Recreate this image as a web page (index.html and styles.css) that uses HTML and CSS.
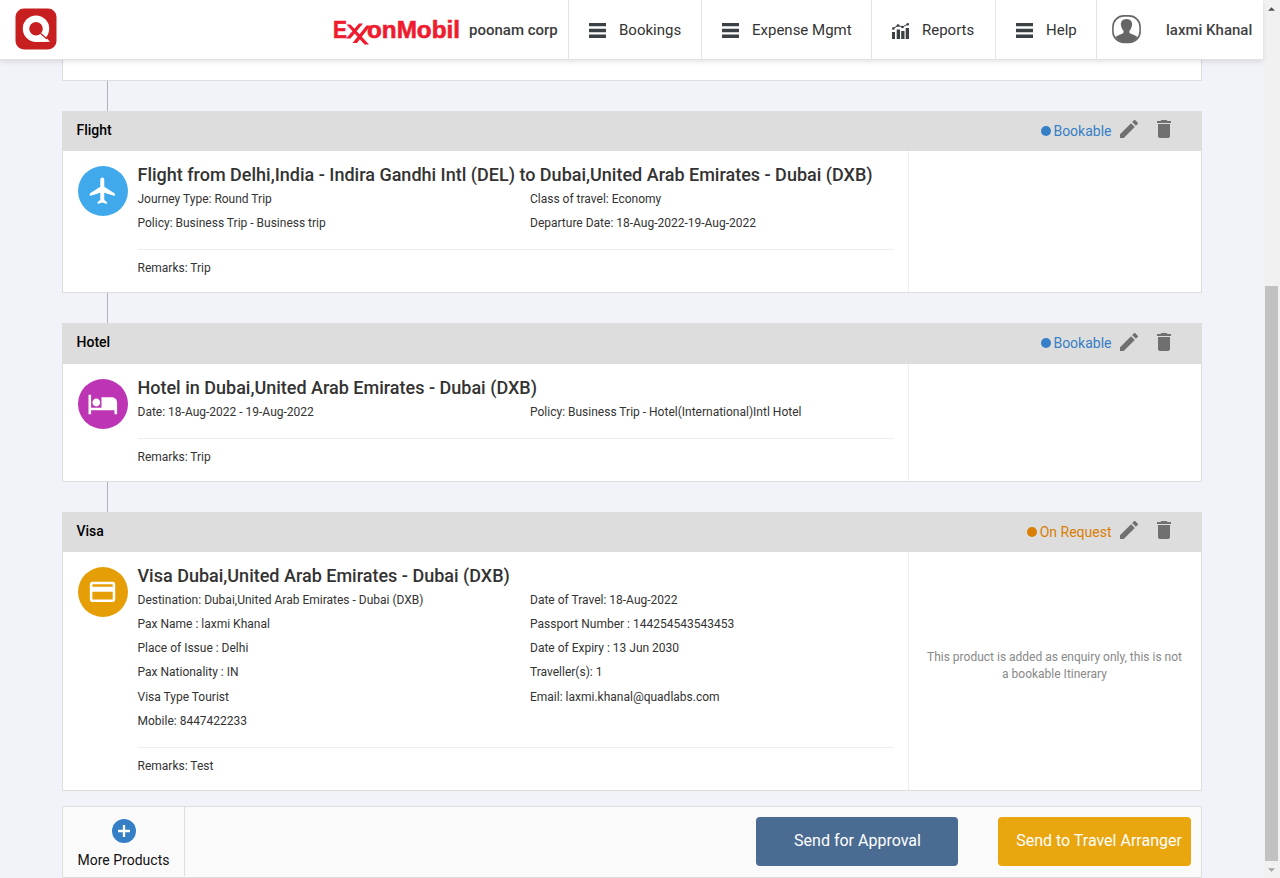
FILE: index.html
```html
<!DOCTYPE html>
<html lang="en">
<head>
<meta charset="utf-8">
<title>Trip request</title>
<link rel="stylesheet" href="styles.css">
</head>
<body>
<svg class="defs" aria-hidden="true">
  <symbol id="pencil" viewBox="0 0 24 24"><path d="M3 17.25V21h3.75L17.81 9.94l-3.75-3.75L3 17.25zM20.71 7.04a1 1 0 0 0 0-1.41l-2.34-2.34a1 1 0 0 0-1.41 0l-1.83 1.83 3.75 3.75 1.83-1.83z"/></symbol>
  <symbol id="trash" viewBox="0 0 24 24"><path d="M6 19c0 1.1.9 2 2 2h8c1.100 0 2-.9 2-2V7H6v12zM19 4h-3.500l-1-1h-5l-1 1H5v2h14V4z"/></symbol>
  <symbol id="bars" viewBox="0 0 17 15"><path d="M0 0h17v3.300H0zM0 5.700h17v3.500H0zM0 11.500h17v3.500H0z"/></symbol>
</svg>
<div class="page">
  <div class="main">
    <header class="topbar">
      <svg class="logo" viewBox="0 0 42 42"><rect x=".5" y=".5" width="41" height="41" rx="8.500" fill="#c71e20"/><circle cx="21" cy="20.700" r="10" fill="none" stroke="#fff" stroke-width="6.400"/><path d="M27 25L35 33.800Q28 34 20 33.800Z" fill="#fff"/><path d="M25.500 25.200L32 31" stroke="#c71e20" stroke-width="1.200"/></svg>
      <div class="corp">
        <svg class="exxon" viewBox="0 0 128 28"><g fill="#ee1c2e" stroke="#ee1c2e" stroke-width=".6" font-family="Liberation Sans, sans-serif" font-weight="700"><text x="0" y="19.300" font-size="23" textLength="14" lengthAdjust="spacingAndGlyphs">E</text><text x="34" y="19.300" font-size="23" textLength="93" lengthAdjust="spacingAndGlyphs">onMobil</text></g><path d="M13.500 5.500H17.500L36 25.500H31.500ZM13 19.500L26 4.500H30L17.500 19.500ZM19.500 24L33.500 6.500H37.500L24 24Z" fill="#ee1c2e"/></svg>
        <span class="corp-name">poonam corp</span>
      </div>
      <nav class="nav">
        <a class="nav-item bookings"><svg class="bars"><use href="#bars"/></svg><span>Bookings</span></a>
        <a class="nav-item expense"><svg class="bars"><use href="#bars"/></svg><span>Expense Mgmt</span></a>
        <a class="nav-item reports"><svg class="chart" viewBox="0 0 17 16"><path d="M0 9h3v7H0zM4.700 6.500h3.300v9.500H4.700zM9.200 8h3.300v8H9.200zM13.700 5h3.300v11h-3.300z"/><path d="M1 5.500L6 2.500L10.500 4L16 1" fill="none" stroke="#3b4144" stroke-width="1"/><circle cx="1.300" cy="5.500" r="1.300"/><circle cx="6" cy="2.600" r="1.400"/><circle cx="10.500" cy="4" r="1.300"/><circle cx="15.700" cy="1.300" r="1.300"/></svg><span>Reports</span></a>
        <a class="nav-item help"><svg class="bars"><use href="#bars"/></svg><span>Help</span></a>
        <a class="nav-item user"><svg class="avatar" viewBox="0 0 30 29"><rect x=".9" y=".9" width="27.200" height="26.600" rx="11" fill="none" stroke="#666" stroke-width="1.600"/><path d="M14.500 4c-4 0-6 2.800-5.600 6 .2 1.300.5 1.600.8 2.700.4 1.500 1 2.100 1.800 3 .5 1.700-.1 2.700-2 3.400-2.800 1-4.700 1.700-6 3.200C5.500 25.500 9 27.500 14.500 27.500s9-2 11-5.200c-1.300-1.500-3.200-2.200-6-3.200-1.900-.7-2.500-1.700-2-3.400.8-.9 1.400-1.500 1.800-3 .3-1.100.6-1.400.8-2.700C20.500 6.800 18.500 4 14.500 4z" fill="#666"/></svg><span>laxmi Khanal</span></a>
      </nav>
    </header>
    <main class="content">
      <div class="card-tail"></div>
      <div class="connector"></div>

      <section class="card flight">
        <div class="card-head"><h3>Flight</h3><div class="status blue"><i class="dot"></i><span>Bookable</span></div><svg class="act"><use href="#pencil"/></svg><svg class="act"><use href="#trash"/></svg></div>
        <div class="card-body">
          <div class="info">
            <svg class="badge" viewBox="0 0 50 50"><circle cx="25" cy="25" r="25" fill="#3fa9eb"/><path transform="translate(9.100 8.900) scale(1.320)" fill="#fff" d="M21 16v-2l-8-5V3.500a1.500 1.500 0 0 0-3 0V9l-8 5v2l8-2.500V19l-2 1.500V22l3.500-1 3.500 1v-1.500L13 19v-5.500l8 2.500z"/></svg>
            <div class="details">
              <h2>Flight from Delhi,India - Indira Gandhi Intl (DEL) to Dubai,United Arab Emirates - Dubai (DXB)</h2>
              <div class="facts"><span>Journey Type: Round Trip</span><span>Class of travel: Economy</span><span>Policy: Business Trip - Business trip</span><span>Departure Date: 18-Aug-2022-19-Aug-2022</span></div>
              <p class="remarks">Remarks: Trip</p>
            </div>
          </div>
          <aside class="note"></aside>
        </div>
      </section>
      <div class="connector"></div>

      <section class="card hotel">
        <div class="card-head"><h3>Hotel</h3><div class="status blue"><i class="dot"></i><span>Bookable</span></div><svg class="act"><use href="#pencil"/></svg><svg class="act"><use href="#trash"/></svg></div>
        <div class="card-body">
          <div class="info">
            <svg class="badge" viewBox="0 0 50 50"><circle cx="25" cy="25" r="25" fill="#bd34b5"/><path transform="translate(9.200 9.200) scale(1.300)" fill="#fff" d="M7 14c1.660 0 3-1.340 3-3S8.660 8 7 8s-3 1.340-3 3 1.340 3 3 3zM19 7h-8v8H3V5H1v15h2v-3h18v3h2v-9c0-2.210-1.790-4-4-4z"/></svg>
            <div class="details">
              <h2>Hotel in Dubai,United Arab Emirates - Dubai (DXB)</h2>
              <div class="facts"><span>Date: 18-Aug-2022 - 19-Aug-2022</span><span>Policy: Business Trip - Hotel(International)Intl Hotel</span></div>
              <p class="remarks">Remarks: Trip</p>
            </div>
          </div>
          <aside class="note"></aside>
        </div>
      </section>
      <div class="connector"></div>

      <section class="card visa">
        <div class="card-head"><h3>Visa</h3><div class="status orange"><i class="dot"></i><span>On Request</span></div><svg class="act"><use href="#pencil"/></svg><svg class="act"><use href="#trash"/></svg></div>
        <div class="card-body">
          <div class="info">
            <svg class="badge" viewBox="0 0 50 50"><circle cx="25" cy="25" r="25" fill="#e59e05"/><path transform="translate(9.300 9.600) scale(1.270)" fill="#fff" d="M20 4H4c-1.110 0-1.990.89-1.990 2L2 18c0 1.110.89 2 2 2h16c1.110 0 2-.89 2-2V6c0-1.110-.89-2-2-2zm0 14H4v-6h16v6zm0-10H4V6h16v2z"/></svg>
            <div class="details">
              <h2>Visa Dubai,United Arab Emirates - Dubai (DXB)</h2>
              <div class="facts"><span>Destination: Dubai,United Arab Emirates - Dubai (DXB)</span><span>Date of Travel: 18-Aug-2022</span><span>Pax Name : laxmi Khanal</span><span>Passport Number : 144254543543453</span><span>Place of Issue : Delhi</span><span>Date of Expiry : 13 Jun 2030</span><span>Pax Nationality : IN</span><span>Traveller(s): 1</span><span>Visa Type Tourist</span><span>Email: laxmi.khanal@quadlabs.com</span><span>Mobile: 8447422233</span></div>
              <p class="remarks">Remarks: Test</p>
            </div>
          </div>
          <aside class="note">This product is added as enquiry only, this is not a bookable Itinerary</aside>
        </div>
      </section>

      <footer class="actions">
        <div class="more"><svg class="plus" viewBox="0 0 24 24"><circle cx="12" cy="12" r="12" fill="#357fc6"/><path d="M12 6v12M6 12h12" stroke="#fff" stroke-width="2.300"/></svg><span>More Products</span></div>
        <button class="btn approve">Send for Approval</button>
        <button class="btn arrange">Send to Travel Arranger</button>
      </footer>
    </main>
  </div>
  <div class="scrollbar">
    <svg class="arrow" viewBox="0 0 8 4"><path d="M0 4L4 0L8 4Z" fill="#505050"/></svg>
    <div class="thumb"></div>
    <svg class="arrow" viewBox="0 0 8 4"><path d="M0 0L4 4L8 0Z" fill="#a3a3a3"/></svg>
  </div>
</div>
</body>
</html>
```

FILE: styles.css
```css
* { box-sizing: border-box; }
html, body { margin: 0; height: 878px; overflow: hidden; }
body { font-family: Roboto, sans-serif; font-size: 12px; color: #333; background: #f2f3f8; }
h2, h3, p { margin: 0; }
.defs { display: none; }
.page { display: flex; height: 878px; }
.main { width: 1263px; display: flex; flex-direction: column; }

.topbar { height: 60px; flex: none; display: flex; align-items: stretch; background: #fff; border-bottom: 1px solid #e1e2e6; box-shadow: 0 2px 5px rgba(0,0,0,.1); position: relative; }
.logo { width: 42px; height: 42px; margin: 8px 0 0 15px; }
.corp { margin-left: auto; display: flex; padding-right: 10px; }
.exxon { width: 128px; height: 28px; margin: 19px 8px 0 0; overflow: visible; }
.corp-name { font-size: 15px; font-weight: 500; line-height: 60px; width: 89px; white-space: nowrap; color: #3c3c3c; }
.nav { display: flex; }
.nav-item { display: flex; border-left: 1px solid #e1e2e6; padding-left: 20px; font-size: 15px; line-height: 60px; color: #333; white-space: nowrap; }
.bookings { width: 133px; }
.expense { width: 170px; }
.reports { width: 124px; }
.help { width: 101px; }
.user { width: 167px; padding-left: 15px; font-weight: 500; color: #444; }
.bars { width: 17px; height: 15px; margin: 23px 13px 0 0; fill: #3b4144; }
.chart { width: 17px; height: 16px; margin: 23px 13px 0 0; fill: #3b4144; }
.avatar { width: 30px; height: 29px; margin: 15px 24px 0 0; }

.content { width: 1140px; margin-left: 62px; }
.card-tail { height: 21px; background: #fff; border: 1px solid #ddd; border-top: 0; }
.connector { width: 1px; height: 30px; margin-left: 45px; background: #afb3b9; }
.card { background: #fff; border: 1px solid #ddd; display: flex; flex-direction: column; }
.flight { height: 182px; }
.hotel { height: 159px; }
.visa { height: 279px; }
.card-head { height: 39px; flex: none; background: #ddd; display: flex; align-items: flex-start; padding: 0 25px 0 13.500px; }
.hotel .card-head { height: 40px; }
.card-head h3 { font-size: 14px; font-weight: 500; line-height: 37px; color: #000; margin-right: auto; }
.status { display: flex; align-items: center; gap: 2.500px; font-size: 14px; line-height: 39px; }
.dot { width: 10px; height: 10px; border-radius: 50%; background: currentColor; margin-bottom: 1px; }
.blue { color: #357fc6; }
.orange { color: #d97f06; }
.act { width: 24px; height: 24px; margin: 5px 0 0 5.500px; fill: #707070; }
.hotel .act { margin-top: 6px; }
.act + .act { margin-left: 11px; }
.card-body { flex: 1; display: flex; }
.info { width: 845px; flex: none; display: flex; padding: 0 15px; }
.badge { width: 50px; height: 50px; margin: 15px 9.500px 0 0; flex: none; }
.details { flex: 1; padding-top: 12px; white-space: nowrap; }
h2 { font-size: 18px; font-weight: 500; line-height: 24px; }
.facts { display: grid; grid-template-columns: 392.500px 1fr; line-height: 24.150px; padding-bottom: 14px; border-bottom: 1px solid #eee; }
.remarks { line-height: 17px; padding-top: 10px; }
.note { flex: 1; border-left: 1px solid #eee; display: flex; align-items: center; text-align: center; padding: 0 17px 10px 16px; line-height: 17px; color: #888; }

.actions { height: 72px; margin-top: 15px; border: 1px solid #ddd; background: #fafafa; display: flex; padding-right: 10px; }
.more { width: 122px; height: 69px; border-right: 1px solid #ddd; display: flex; flex-direction: column; align-items: center; padding-top: 12px; font-size: 14px; line-height: 18px; color: #111; }
.plus { width: 24px; height: 24px; margin-bottom: 8px; }
.btn { height: 49px; margin-top: 10px; border: 0; border-radius: 4px; color: #fff; font-family: inherit; font-size: 16px; white-space: nowrap; padding: 0 0 2px; }
.approve { width: 202px; margin-left: auto; margin-right: 40px; padding-left: 1px; background: #4b6c92; }
.arrange { width: 193px; padding-left: 9px; background: #e9a60e; }

.scrollbar { width: 17px; background: #f1f1f1; display: flex; flex-direction: column; align-items: center; }
.arrow { width: 7px; height: 4px; margin: 7px 0 6px; flex: none; }
.thumb { width: 13px; height: 575px; margin-top: 269px; background: #c1c1c1; }
```
